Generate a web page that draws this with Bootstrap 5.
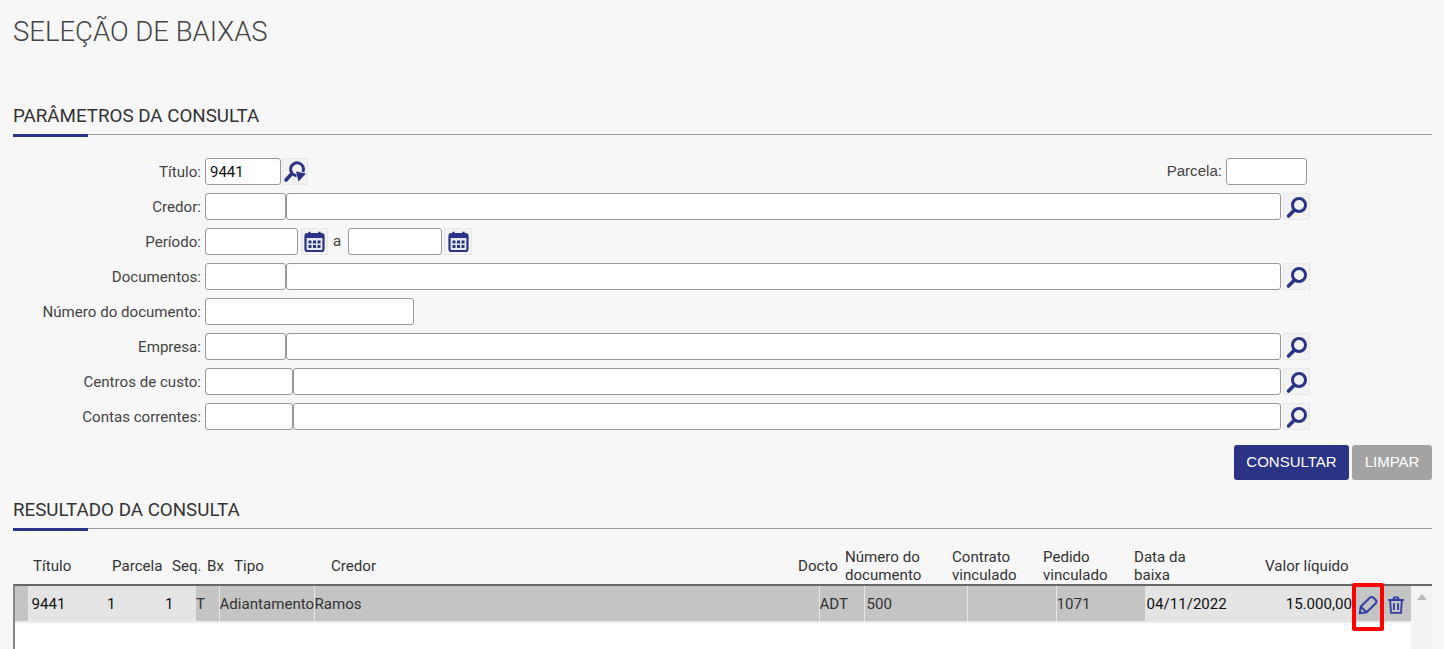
<!DOCTYPE html>
<html lang="pt-BR">
<head>
<meta charset="utf-8">
<title>Seleção de baixas</title>
<link rel="stylesheet" href="https://cdn.jsdelivr.net/npm/bootstrap@5.3.0/dist/css/bootstrap.min.css">
<style>
html,body{height:649px;overflow:hidden}
body{background:#f7f7f7;font-family:Roboto,"Liberation Sans",sans-serif;font-size:15.1px;color:#444;padding:0 12px 0 13px}
.ttl{font-size:27.5px;font-weight:300;color:#444;line-height:32px;margin:16px 0 0}
.sec{font-size:18.75px;font-weight:400;color:#333;line-height:24px;height:31px;margin:0;border-bottom:1px solid #999;position:relative}
.sec::after{content:"";position:absolute;left:0;bottom:-3px;width:75px;height:3px;background:#2b3384}
.sec1{margin-top:56px}
.sec2{margin-top:18px;height:31px}
.frm{margin-top:23px;display:flex;flex-direction:column;gap:8px}
.lin{height:27px;display:flex;align-items:center}
.lab{width:188px;margin-right:4px;padding-top:1px;text-align:right;flex:none}
.form-control.inp{height:27px;min-height:27px;padding:0 4px;border:1px solid #999;border-radius:3px;font-size:15px;color:#111;background:#fff;box-shadow:none;flex:none}
.w76{width:76px}.w81{width:81px}.w88{width:88px}.w93{width:93px}.w94{width:94px}.w209{width:209px}
.wc1{width:995px}.wc2{width:988px}
.ib{height:27px;width:27px;flex:none;background:#f2f2f2;border:1px solid #e8e8e8;display:flex;align-items:center;justify-content:center;margin-left:2px}
.ib svg{width:25px;height:25px;flex:none}
.ib1{width:26px;margin-left:1px}
.ib2{margin-left:3px}
.ib3{width:28px}
.sep{margin:0 7px 0 5px}
.lr{margin-left:auto;margin-right:125px;display:flex;align-items:center}
.lr label{margin-right:4px;font-family:"Liberation Sans",sans-serif}
.acts{display:flex;justify-content:flex-end;gap:3px;margin-top:15px}
.btn.bk{height:35px;font-size:15px;font-family:"Liberation Sans",sans-serif;color:#fff;border:0;border-radius:3px;padding:0;text-transform:uppercase}
.bk1{width:115px;background:#2b3384}
.bk2{width:80px;background:#a3a3a3}
.hdt{table-layout:fixed;width:1419px;border-collapse:collapse;margin-top:19px;height:36px}
.hdt th{font-weight:400;color:#333;line-height:18px;padding:0;vertical-align:middle;text-align:left}
.gridbox{position:relative;height:65px;border-top:2px solid #666;border-left:2px solid #888;background:#fff;display:flex}
.gridmain{width:1396px;flex:none}
.scr{flex:1;background:#f3f3f3;padding:8px 0 0 6px}
.scr span{display:block;width:0;height:0;border-left:5px solid transparent;border-right:5px solid transparent;border-bottom:6px solid #bbb}
.bdt{table-layout:fixed;width:1396px;border-collapse:collapse;height:35px;box-shadow:0 2px 0 #ebebeb}
.bdt td{padding:1px 0 0;background:#c4c4c4;color:#333;height:35px;border-right:1px solid #e6e6e6;white-space:nowrap;overflow:hidden}
.bdt td.lt{background:#e4e4e4;color:#111;border-right:0}
.bdt td.p3{padding-left:3px}
.bdt td.p2{padding-left:2px}
.bdt td.p1{padding-left:1px}
.bdt td.r{text-align:right;padding-right:1px}
.bdt td.ico{text-align:center;border-right:2px solid #e6e6e6}
.bdt td.ico:last-child{border-right:0;padding-right:4px}
.bdt td svg{width:22px;height:22px;vertical-align:middle}
.bdt td:last-child svg{width:20px;height:20px}
.redbox{position:absolute;left:1337px;top:-3px;width:32px;height:48px;border:4px solid #f00;border-radius:2px;pointer-events:none}
</style>
</head>
<body>
<h1 class="ttl">SELEÇÃO DE BAIXAS</h1>
<h2 class="sec sec1">PARÂMETROS DA CONSULTA</h2>

<svg width="0" height="0" class="position-absolute">
  <defs>
    <symbol id="lupa" viewBox="0 0 25 25">
      <circle cx="15" cy="11" r="6.5" fill="none" stroke="#2b3384" stroke-width="3"/>
      <path d="M10 16.500 L4.500 22" stroke="#2b3384" stroke-width="3.600" stroke-linecap="round"/>
    </symbol>
    <symbol id="lupa2" viewBox="0 0 25 25">
      <path d="M20 13 A6.500 6.500 0 1 0 13.500 16.800" fill="none" stroke="#2b3384" stroke-width="3"/>
      <path d="M8 15.500 L3 21" stroke="#2b3384" stroke-width="3.600" stroke-linecap="round"/>
      <path d="M13 12.500 L23 14.500 L15.500 22.500 Z" fill="#2b3384"/>
    </symbol>
    <symbol id="cal" viewBox="0 0 25 25">
      <rect x="3.500" y="5" width="18" height="17" rx="2" fill="#e6e8f4" stroke="#2b3384" stroke-width="2.200"/>
      <rect x="3.500" y="5" width="18" height="4" fill="#2b3384"/>
      <path d="M7.500 2.800v3M17.500 2.800v3" stroke="#2b3384" stroke-width="2.200"/>
      <path d="M6.500 11.500h3v3h-3zM11 11.500h3v3h-3zM15.500 11.500h3v3h-3zM6.500 16h3v3h-3zM11 16h3v3h-3zM15.500 16h3v3h-3z" fill="#2b3384"/>
    </symbol>
  </defs>
</svg>

<form class="frm">
  <div class="lin">
    <label class="lab">Título:</label>
    <input class="form-control inp w76" value="9441">
    <span class="ib ib1"><svg><use href="#lupa2"/></svg></span>
    <div class="lr"><label>Parcela:</label><input class="form-control inp w81"></div>
  </div>
  <div class="lin">
    <label class="lab">Credor:</label>
    <input class="form-control inp w81"><input class="form-control inp wc1">
    <span class="ib"><svg><use href="#lupa"/></svg></span>
  </div>
  <div class="lin">
    <label class="lab">Período:</label>
    <input class="form-control inp w93">
    <span class="ib ib2"><svg><use href="#cal"/></svg></span>
    <span class="sep">a</span>
    <input class="form-control inp w94">
    <span class="ib ib3"><svg><use href="#cal"/></svg></span>
  </div>
  <div class="lin">
    <label class="lab">Documentos:</label>
    <input class="form-control inp w81"><input class="form-control inp wc1">
    <span class="ib"><svg><use href="#lupa"/></svg></span>
  </div>
  <div class="lin">
    <label class="lab">Número do documento:</label>
    <input class="form-control inp w209">
  </div>
  <div class="lin">
    <label class="lab">Empresa:</label>
    <input class="form-control inp w81"><input class="form-control inp wc1">
    <span class="ib"><svg><use href="#lupa"/></svg></span>
  </div>
  <div class="lin">
    <label class="lab">Centros de custo:</label>
    <input class="form-control inp w88"><input class="form-control inp wc2">
    <span class="ib"><svg><use href="#lupa"/></svg></span>
  </div>
  <div class="lin">
    <label class="lab">Contas correntes:</label>
    <input class="form-control inp w88"><input class="form-control inp wc2">
    <span class="ib"><svg><use href="#lupa"/></svg></span>
  </div>
</form>

<div class="acts">
  <button type="button" class="btn bk bk1">Consultar</button>
  <button type="button" class="btn bk bk2">Limpar</button>
</div>

<h2 class="sec sec2">RESULTADO DA CONSULTA</h2>

<table class="hdt">
  <colgroup>
    <col style="width:20px"><col style="width:79px"><col style="width:60px"><col style="width:35px"><col style="width:27px"><col style="width:97px"><col style="width:467px"><col style="width:47px"><col style="width:107px"><col style="width:91px"><col style="width:91px"><col style="width:131px"><col>
  </colgroup>
  <tr>
    <th></th><th>Título</th><th>Parcela</th><th>Seq.</th><th>Bx</th><th>Tipo</th><th>Credor</th><th>Docto</th>
    <th>Número do documento</th><th>Contrato vinculado</th><th>Pedido vinculado</th><th>Data da<br>baixa</th><th>Valor líquido</th>
  </tr>
</table>

<div class="gridbox">
  <div class="gridmain">
    <table class="bdt">
      <colgroup>
        <col style="width:13px"><col style="width:77px"><col style="width:58px"><col style="width:33px"><col style="width:23px"><col style="width:95px"><col style="width:505px"><col style="width:45px"><col style="width:103px"><col style="width:89px"><col style="width:89px"><col style="width:86px"><col style="width:122px"><col style="width:30px"><col>
      </colgroup>
      <tr>
        <td></td>
        <td class="lt p3">9441</td>
        <td class="lt p2">1</td>
        <td class="lt p2">1</td>
        <td>T</td>
        <td>Adiantamento</td>
        <td>Ramos</td>
        <td>ADT</td>
        <td class="p2">500</td>
        <td></td>
        <td>1071</td>
        <td class="lt p1">04/11/2022</td>
        <td class="lt r">15.000,00</td>
        <td class="ico">
          <svg viewBox="0 0 24 24" fill="none" stroke="#3240a0" stroke-width="2.200" stroke-linejoin="round"><path d="M3 21 L4 14 L14 4 Q16 2.500 18 4 L20.500 6.500 Q22 8.500 20.500 10 L10.500 20 Z M4 14 L10.500 20"/></svg>
        </td>
        <td class="ico">
          <svg viewBox="0 0 24 24" fill="none" stroke="#3240a0" stroke-width="2.200" stroke-linejoin="round"><path d="M2.500 6h19M8.500 6 L9.500 3h5l1 3M5 6l1 15.500h12L19 6M9.500 10v8M14.500 10v8"/></svg>
        </td>
      </tr>
    </table>
  </div>
  <div class="scr"><span></span></div>
  <div class="redbox"></div>
</div>
</body>
</html>
